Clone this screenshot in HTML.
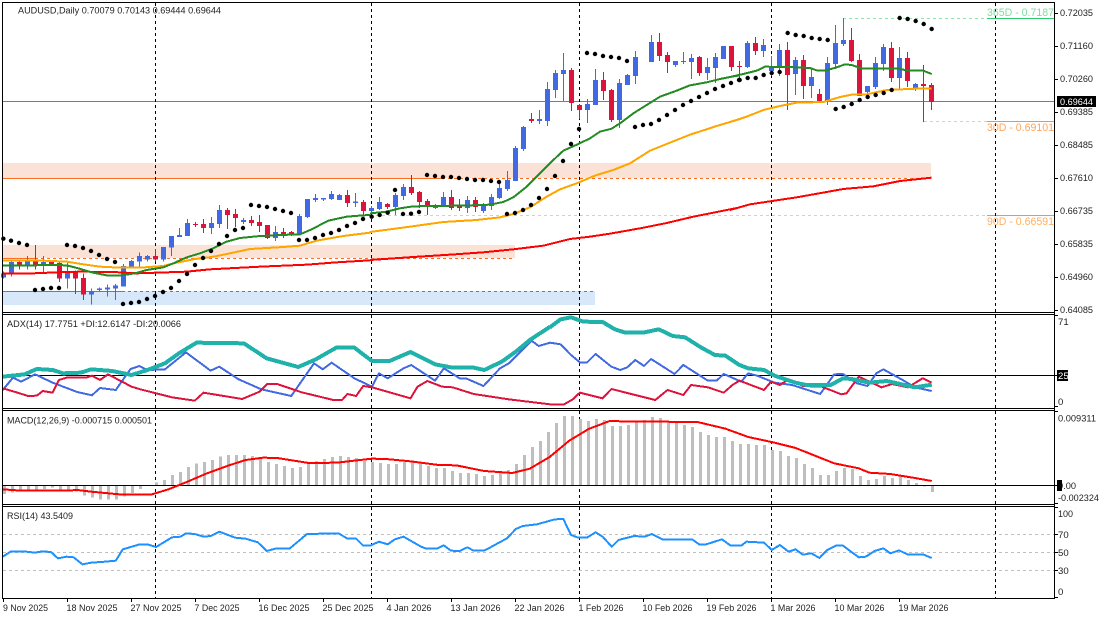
<!DOCTYPE html>
<html><head><meta charset="utf-8"><style>
html,body{margin:0;padding:0;background:#fff;width:1100px;height:619px;overflow:hidden}
svg{display:block}
text{font-family:"Liberation Sans",sans-serif;font-size:9.6px;fill:#222}
.n{fill:none;vector-effect:non-scaling-stroke}
.n *{vector-effect:non-scaling-stroke}
polyline,path{vector-effect:non-scaling-stroke;fill:none}
</style></head><body>
<svg width="1100" height="619" viewBox="0 0 1100 619" xmlns="http://www.w3.org/2000/svg">
<rect width="1100" height="619" fill="#fff"/>
<!-- zones -->
<rect x="3" y="163" width="928" height="15" fill="#fbe2d6"/>
<rect x="3" y="245" width="512" height="13" fill="#fbe2d6"/>
<rect x="3" y="291" width="592" height="14" fill="#d6e8f9"/>
<g shape-rendering="crispEdges" stroke-width="1">
<path d="M3 178.5H442" stroke="#ff6d22"/>
<path d="M442 178.5H931" stroke="#ff6d22" stroke-dasharray="3 3"/>
<path d="M3 258.5H35" stroke="#ff6d22"/>
<path d="M35 258.5H515" stroke="#ff6d22" stroke-dasharray="3 3"/>
<path d="M3 291.5H122" stroke="#3c87d6"/>
<path d="M122 291.5H595" stroke="#3c87d6" stroke-dasharray="3 3"/>
<path d="M3 101.5H1055" stroke="#708090"/>
<path d="M843 18.5H987" stroke="#8fe3ae" stroke-dasharray="3 3"/>
<path d="M987 18.5H1054" stroke="#2ecc71"/>
<path d="M924 121.5H987" stroke="#f9c79b" stroke-dasharray="3 3"/>
<path d="M987 121.5H1054" stroke="#ff9330"/>
<path d="M376 215.5H987" stroke="#f9c79b" stroke-dasharray="3 3"/>
<path d="M987 215.5H1054" stroke="#ff9330"/>
</g>
<!-- vertical dashed -->
<g shape-rendering="crispEdges" stroke="#000" stroke-width="1" stroke-dasharray="3 3">
<path d="M155.5 3V598"/><path d="M371.5 3V598"/><path d="M579.5 3V598"/><path d="M771.5 3V598"/><path d="M995.5 3V598"/>
</g>
<!-- candles -->
<g transform="scale(1 .33333)" shape-rendering="crispEdges">
<path stroke="#4169e1" stroke-width="1" d="M3.5 815V835M11.5 780V830M27.5 768V808M43.5 768V820M67.5 786V866M91.5 866V914M99.5 862V873M107.5 854V890M115.5 852V900M123.5 792V860M131.5 780V803M139.5 758V803M147.5 765V785M163.5 741V785M171.5 708V768M179.5 684V711M187.5 657V708M211.5 651V702M219.5 615V684M243.5 654V672M275.5 678V723M299.5 642V702M307.5 597V654M315.5 582V606M323.5 594V603M331.5 573V600M339.5 582V600M355.5 579V621M371.5 618V640M379.5 591V630M395.5 579V645M403.5 552V600M435.5 612V627M443.5 576V621M467.5 588V639M483.5 609V639M491.5 582V630M499.5 543V597M507.5 513V573M515.5 438V543M523.5 378V453M539.5 330V372M547.5 246V378M555.5 210V294M563.5 159V303M587.5 297V369M595.5 207V315M619.5 237V384M627.5 222V255M635.5 153V252M651.5 105V186M675.5 183V201M683.5 156V192M691.5 162V237M707.5 174V240M715.5 159V249M723.5 138V177M747.5 123V204M763.5 117V171M771.5 168V228M779.5 132V228M795.5 171V285M811.5 207V294M827.5 171V315M835.5 75V207M843.5 54V138M867.5 258V291M875.5 171V267M883.5 132V213M899.5 141V267M915.5 249V273"/>
<path stroke="#4169e1" stroke-width="5" d="M3.5 821V832M11.5 786V824M27.5 783V797M43.5 786V797M67.5 816V836M91.5 873V884M99.5 866V870M107.5 863V869M115.5 857V866M123.5 798V860M131.5 783V801M139.5 768V785M147.5 768V779M163.5 741V779M171.5 708V743M179.5 705V711M187.5 669V708M211.5 669V684M219.5 630V672M243.5 660V666M275.5 696V714M299.5 648V702M307.5 597V651M315.5 594V600M323.5 594V599M331.5 582V597M339.5 585V600M355.5 605V609M371.5 624V633M379.5 606V627M395.5 585V621M403.5 561V588M435.5 615V624M443.5 591V618M467.5 600V624M483.5 615V633M491.5 591V618M499.5 564V594M507.5 540V567M515.5 444V543M523.5 381V447M539.5 357V363M547.5 267V363M555.5 219V270M563.5 210V222M587.5 312V330M595.5 240V315M619.5 249V360M627.5 225V255M635.5 171V228M651.5 126V186M675.5 183V195M683.5 183V186M691.5 174V186M707.5 201V219M715.5 171V204M723.5 138V177M747.5 129V201M763.5 135V153M771.5 201V213M779.5 150V204M795.5 180V222M811.5 231V258M827.5 189V303M835.5 129V192M843.5 120V132M867.5 258V276M875.5 189V261M883.5 141V192M899.5 174V234M915.5 252V267"/>
<path stroke="#dc143c" stroke-width="1" d="M19.5 783V808M35.5 735V808M51.5 783V795M59.5 783V846M75.5 812V882M83.5 820V900M155.5 747V785M195.5 666V681M203.5 657V699M227.5 624V687M235.5 627V681M251.5 648V678M259.5 645V696M267.5 675V717M283.5 684V714M291.5 693V708M347.5 570V621M363.5 600V648M387.5 609V627M411.5 525V585M419.5 573V624M427.5 597V645M451.5 570V630M459.5 597V633M475.5 591V636M531.5 339V369M571.5 204V333M579.5 312V357M603.5 216V300M611.5 267V366M659.5 99V183M667.5 156V219M699.5 168V228M731.5 138V213M739.5 183V240M755.5 111V165M787.5 126V330M803.5 165V297M819.5 267V309M851.5 84V186M859.5 162V288M891.5 126V246M907.5 156V261M923.5 195V366M931.5 249V330"/>
<path stroke="#dc143c" stroke-width="5" d="M19.5 786V797M35.5 783V797M51.5 783V792M59.5 789V836M75.5 816V836M83.5 834V884M155.5 768V779M195.5 672V675M203.5 672V684M227.5 630V645M235.5 642V654M251.5 660V669M259.5 666V678M267.5 675V714M283.5 696V702M291.5 696V702M347.5 585V609M363.5 606V633M387.5 612V621M411.5 561V579M419.5 576V606M427.5 603V618M451.5 591V624M459.5 620V624M475.5 600V621M531.5 357V363M571.5 210V309M579.5 315V330M603.5 240V273M611.5 270V360M659.5 126V168M667.5 165V186M699.5 171V219M731.5 138V201M739.5 198V201M755.5 129V153M787.5 150V225M803.5 180V258M819.5 282V306M851.5 120V183M859.5 180V288M891.5 144V234M907.5 174V243M923.5 252V258M931.5 255V306"/>
</g>
<!-- MA lines -->
<g shape-rendering="crispEdges" stroke-width="2" stroke-linejoin="round">
<g transform="scale(.33333)">
<polyline stroke="#ff0000" points="8,821 100,820 170,817 240,815 340,816 410,820 470,818 560,815 630,808 780,800 920,794 1010,787 1110,781"/>
<polyline stroke="#ffa500" points="8,782 130,782 200,785 250,793 300,800 360,803 420,803 490,798 530,788 580,778 640,770 690,760 750,747 850,741 900,737 950,722 1030,708 1110,698"/>
<polyline stroke="#228b22" points="8,797 100,796 150,795 200,796 235,805 275,817 320,826 365,826 405,820 440,810 490,802 520,790 560,772 600,760 640,745 680,725 720,714 780,708 840,705 900,703 935,688 985,662 1040,650 1090,646 1110,645"/>
</g>
<g transform="translate(370 0) scale(.33333)">
<polyline stroke="#ff0000" points="0,780 130,771 240,764 340,757 430,748 520,737 600,717 660,710 720,701 810,685 890,669 970,650 1110,622"/>
<polyline stroke="#ffa500" points="0,696 60,688 120,680 220,666 320,660 390,652 430,642 480,622 530,590 570,568 620,550 680,525 730,510 780,490 840,452 900,428 960,404 1040,378 1110,357"/>
<polyline stroke="#228b22" points="0,640 50,635 90,625 130,619 200,618 300,616 360,614 400,606 430,592 470,560 510,520 550,480 580,452 625,432 660,415 690,395 725,386 750,370 790,340 830,315 870,290 920,272 960,256 1010,247 1050,237 1090,229 1110,226"/>
</g>
<g transform="translate(730 0) scale(.33333)">
<polyline stroke="#ff0000" points="0,630 60,613 120,604 200,592 290,576 340,567 430,559 510,543 605,533"/>
<polyline stroke="#ffa500" points="0,366 50,350 100,330 150,318 200,308 280,306 330,291 370,283 410,283 470,270 580,265 605,266"/>
<polyline stroke="#228b22" points="0,231 40,222 80,212 105,200 200,202 240,204 260,211 285,212 320,202 345,193 365,195 395,205 500,205 530,211 580,212 605,222"/>
</g>
</g>
<!-- SAR -->
<g stroke="#000" stroke-width="4.4" stroke-linecap="round">
<path transform="scale(.33333)" d="M10 716h.1M33 722h.1M57 729h.1M81 735h.1M105 870h.1M129 867h.1M153 864h.1M177 864h.1M201 735h.1M225 738h.1M249 744h.1M273 753h.1M297 765h.1M321 777h.1M345 786h.1M369 912h.1M393 909h.1M417 906h.1M441 897h.1M465 888h.1M489 876h.1M513 864h.1M537 843h.1M561 822h.1M585 795h.1M609 774h.1M633 753h.1M657 732h.1M681 708h.1M705 690h.1M729 684h.1M753 615h.1M777 618h.1M801 621h.1M825 627h.1M849 633h.1M873 639h.1M897 720h.1M921 720h.1M945 714h.1M969 705h.1M993 699h.1M1017 690h.1M1041 678h.1M1065 669h.1M1089 657h.1"/>
<path transform="translate(370 0) scale(.33333)" d="M5 650h.1M29 645h.1M53 638h.1M75 570h.1M99 642h.1M123 641h.1M147 636h.1M171 525h.1M195 528h.1M219 531h.1M243 531h.1M267 534h.1M291 537h.1M315 540h.1M339 540h.1M363 543h.1M387 546h.1M411 642h.1M435 639h.1M459 630h.1M483 615h.1M507 594h.1M531 567h.1M555 528h.1M579 483h.1M603 432h.1M627 387h.1M651 159h.1M675 162h.1M699 168h.1M723 171h.1M747 174h.1M771 183h.1M795 381h.1M819 375h.1M843 372h.1M867 360h.1M891 345h.1M915 330h.1M939 315h.1M963 303h.1M987 291h.1M1011 279h.1M1035 267h.1M1059 258h.1M1083 249h.1M1107 240h.1"/>
<path transform="translate(730 0) scale(.33333)" d="M29 240h.1M53 234h.1M77 234h.1M101 225h.1M125 219h.1M149 216h.1M173 99h.1M197 105h.1M221 108h.1M245 114h.1M269 117h.1M293 120h.1M317 327h.1M341 321h.1M365 312h.1M389 300h.1M413 291h.1M437 285h.1M461 279h.1M485 270h.1M509 54h.1M533 57h.1M557 63h.1M581 72h.1M605 87h.1"/>
</g>
<!-- ADX -->
<g shape-rendering="crispEdges" stroke-linejoin="round">
<path d="M3 375.5H1055" stroke="#000" stroke-width="1"/>
<g transform="translate(0 310) scale(.35088 .33333)">
<polyline stroke="#4169e1" stroke-width="2" points="8,240 37,203 60,215 100,193 150,218 220,246 262,256 285,234 330,240 372,177 397,168 420,180 470,178 530,127 600,182 625,170 680,208 745,238 830,258 895,160 920,178 945,158 1010,205 1060,230 1080,190 1105,205 1150,175 1172,165 1240,212 1265,175 1310,205 1330,206 1378,228 1425,175 1450,160 1515,92 1535,108 1568,98"/>
<polyline stroke="#dc143c" stroke-width="2" points="8,235 50,248 80,258 105,257 122,243 150,248 168,210 190,203 245,203 262,197 285,210 308,193 375,230 400,238 490,262 555,272 580,248 690,267 740,245 762,222 790,222 860,247 950,270 975,270 990,252 1015,258 1035,228 1060,232 1170,265 1190,230 1218,213 1260,230 1290,232 1350,252 1450,268 1568,283"/>
<polyline stroke="#20b2aa" stroke-width="4" points="8,200 70,193 105,177 150,180 180,190 230,188 260,178 320,183 375,195 420,180 470,160 510,130 560,98 695,100 760,145 850,171 900,148 960,112 1010,113 1060,153 1110,153 1170,126 1240,163 1290,173 1350,173 1380,180 1430,155 1470,125 1510,90 1568,50"/>
</g>
<g transform="translate(550 310) scale(.35088 .33333)">
<polyline stroke="#4169e1" stroke-width="2" points="0,98 30,103 60,135 85,157 105,158 130,132 175,170 200,180 220,172 243,150 268,168 288,147 355,192 380,165 450,212 475,212 495,192 545,215 565,190 590,197 640,218 690,225 770,252 810,193 835,192 875,220 905,228 930,190 950,178 1010,213 1040,232 1088,243"/>
<polyline stroke="#dc143c" stroke-width="2" points="0,283 40,283 65,268 85,248 150,265 175,237 300,270 335,240 380,255 402,225 450,232 495,248 520,225 540,212 610,240 630,215 655,225 680,208 720,228 775,230 830,253 845,250 880,200 945,232 975,222 1020,232 1062,205 1088,218"/>
<polyline stroke="#20b2aa" stroke-width="4" points="0,52 30,28 60,22 95,35 150,36 185,58 215,68 265,68 310,58 350,78 385,82 430,112 470,135 500,137 540,165 565,175 610,180 640,197 700,218 730,225 800,225 835,205 860,207 910,218 960,213 1040,232 1088,224"/>
</g>
</g>
<!-- MACD -->
<g shape-rendering="crispEdges">
<g transform="translate(0 310) scale(1 .33333)">
<path stroke="#bebebe" stroke-width="3" d="M4.5 526V552M12.5 526V548M20.5 526V543M28.5 526V545M36.5 526V540M44.5 526V537M52.5 526V533M60.5 526V540M68.5 526V545M76.5 526V545M84.5 526V557M92.5 526V563M100.5 526V569M108.5 526V569M116.5 526V569M124.5 526V560M132.5 526V549M140.5 526V537M156.5 526V517M164.5 526V510M172.5 526V495M180.5 526V486M188.5 526V471M196.5 526V461M204.5 526V456M212.5 526V450M220.5 526V440M228.5 526V435M236.5 526V435M244.5 526V435M252.5 526V438M260.5 526V445M268.5 526V456M276.5 526V462M284.5 526V468M292.5 526V474M300.5 526V471M308.5 526V459M316.5 526V453M324.5 526V447M332.5 526V441M340.5 526V438M348.5 526V441M356.5 526V444M364.5 526V453M372.5 526V456M380.5 526V459M388.5 526V462M396.5 526V462M404.5 526V456M412.5 526V456M420.5 526V459M428.5 526V468M436.5 526V474M444.5 526V474M452.5 526V483M460.5 526V489M468.5 526V489M476.5 526V492M484.5 526V498M492.5 526V495M500.5 526V489M508.5 526V480M516.5 526V462M524.5 526V435M532.5 526V411M540.5 526V393M548.5 526V366M556.5 526V339M564.5 526V318M572.5 526V318M580.5 526V327M588.5 526V333M596.5 526V327M604.5 526V330M612.5 526V348M620.5 526V348M628.5 526V345M636.5 526V333M644.5 526V330M652.5 526V321M660.5 526V324M668.5 526V333M676.5 526V339M684.5 526V345M692.5 526V351M700.5 526V366M708.5 526V375M716.5 526V381M724.5 526V381M732.5 526V393M740.5 526V402M748.5 526V402M756.5 526V405M764.5 526V405M772.5 526V420M780.5 526V423M788.5 526V438M796.5 526V444M804.5 526V462M812.5 526V474M820.5 526V495M828.5 526V495M836.5 526V483M844.5 526V474M852.5 526V477M860.5 526V498M868.5 526V510M876.5 526V507M884.5 526V498M892.5 526V504M900.5 526V498M908.5 526V510M916.5 526V519M924.5 526V530M932.5 526V546"/>
</g>
<path d="M3 485.5H1055" stroke="#000" stroke-width="1"/>
<g transform="translate(0 310) scale(.35088 .33333)" stroke="#ff0000" stroke-width="2">
<polyline points="8,538 60,542 190,542 220,540 260,545 340,553 430,554 480,538 530,517 590,490 650,467 700,450 750,443 790,444 880,459 960,458 1060,446 1100,447 1170,454 1250,465 1300,466 1380,483 1460,489 1510,476 1568,440"/>
</g>
<g transform="translate(550 310) scale(.35088 .33333)" stroke="#ff0000" stroke-width="2">
<polyline points="0,440 55,392 110,357 170,333 240,335 310,335 420,336 500,356 565,381 640,398 700,414 810,460 880,475 910,488 970,492 1040,504 1088,513"/>
</g>
</g>
<!-- RSI -->
<g shape-rendering="crispEdges">
<g stroke="#c0c0c0" stroke-width="1" stroke-dasharray="3 3">
<path d="M3 534.5H1055"/><path d="M3 552.5H1055"/><path d="M3 570.5H1055"/>
</g>
<g transform="translate(0 500) scale(.35088 .33333)" stroke="#1e90ff" stroke-width="2">
<polyline points="8,170 30,155 75,155 100,158 120,154 145,156 165,175 190,170 210,172 235,193 260,188 300,185 330,182 350,148 395,134 420,133 445,141 490,112 515,110 530,100 555,102 580,110 600,108 625,95 670,113 700,116 735,127 760,153 785,146 825,146 875,102 965,100 990,116 1015,116 1035,137 1055,137 1080,125 1105,133 1125,118 1150,110 1200,140 1215,146 1245,146 1265,136 1285,152 1310,153 1332,142 1350,152 1380,152 1445,115 1470,87 1490,78 1530,73 1568,62"/>
</g>
<g transform="translate(550 500) scale(.35088 .33333)" stroke="#1e90ff" stroke-width="2">
<polyline points="0,62 15,58 38,57 60,105 80,113 105,113 130,97 150,110 176,140 195,120 240,108 270,110 290,102 320,118 405,118 425,133 445,133 490,118 515,137 545,137 560,125 610,128 632,150 655,135 680,155 700,148 720,164 745,160 768,174 790,150 815,137 835,137 880,172 900,170 925,153 950,145 970,160 995,151 1020,164 1065,164 1088,174"/>
</g>
</g>
<!-- frames -->
<g shape-rendering="crispEdges" stroke="#000" stroke-width="1">
<path d="M2.5 2V598.5M1054.5 2V598.5M2 2.5H1055M2 312.5H1055M2 314.5H1055M2 408.5H1055M2 410.5H1055M2 504.5H1055M2 506.5H1055M2 598.5H1055"/>
<path d="M1055 13.5h3M1055 46.5h3M1055 79.5h3M1055 112.5h3M1055 145.5h3M1055 178.5h3M1055 211.5h3M1055 244.5h3M1055 277.5h3M1055 310.5h3M1055 315.5h3M1055 375.5h3M1055 406.5h3M1055 411.5h3M1055 485.5h3M1055 503.5h3M1055 507.5h3M1055 534.5h3M1055 552.5h3M1055 570.5h3M1055 597.5h3"/>
<path d="M3.5 598V602M67.5 598V602M131.5 598V602M195.5 598V602M259.5 598V602M323.5 598V602M387.5 598V602M451.5 598V602M515.5 598V602M579.5 598V602M643.5 598V602M707.5 598V602M771.5 598V602M835.5 598V602M899.5 598V602"/>
</g>
<!-- labels -->
<text x="18" y="13.5" textLength="203" lengthAdjust="spacingAndGlyphs">AUDUSD,Daily  0.70079 0.70143 0.69444 0.69644</text>
<text x="7" y="327" textLength="174" lengthAdjust="spacingAndGlyphs">ADX(14) 17.7751 +DI:12.6147 -DI:20.0066</text>
<text x="7" y="423.5" textLength="145" lengthAdjust="spacingAndGlyphs">MACD(12,26,9) -0.000715 0.000501</text>
<text x="7" y="519" textLength="66" lengthAdjust="spacingAndGlyphs">RSI(14) 43.5409</text>
<g font-size="11">
<text x="987" y="16" textLength="67" lengthAdjust="spacingAndGlyphs" style="fill:#7fdda0;font-size:11px">365D - 0.7187</text>
<text x="987" y="131" textLength="67" lengthAdjust="spacingAndGlyphs" style="fill:#ffa65c;font-size:11px">30D - 0.69101</text>
<text x="987" y="225" textLength="67" lengthAdjust="spacingAndGlyphs" style="fill:#ffb060;font-size:11px">90D - 0.66591</text>
</g>
<g>
<text x="1060" y="16" textLength="33" lengthAdjust="spacingAndGlyphs">0.72035</text>
<text x="1060" y="49" textLength="33" lengthAdjust="spacingAndGlyphs">0.71160</text>
<text x="1060" y="82" textLength="33" lengthAdjust="spacingAndGlyphs">0.70260</text>
<text x="1060" y="115" textLength="33" lengthAdjust="spacingAndGlyphs">0.69385</text>
<text x="1060" y="148" textLength="33" lengthAdjust="spacingAndGlyphs">0.68485</text>
<text x="1060" y="181" textLength="33" lengthAdjust="spacingAndGlyphs">0.67610</text>
<text x="1060" y="214" textLength="33" lengthAdjust="spacingAndGlyphs">0.66735</text>
<text x="1060" y="247" textLength="33" lengthAdjust="spacingAndGlyphs">0.65835</text>
<text x="1060" y="280" textLength="33" lengthAdjust="spacingAndGlyphs">0.64960</text>
<text x="1060" y="313" textLength="33" lengthAdjust="spacingAndGlyphs">0.64085</text>
<rect x="1057" y="96" width="39" height="11" fill="#000"/>
<text x="1060" y="105" textLength="33" lengthAdjust="spacingAndGlyphs" style="fill:#fff">0.69644</text>
<text x="1058" y="325">71</text>
<rect x="1057" y="370" width="11" height="11" fill="#000"/>
<text x="1058" y="379" style="fill:#fff">25</text>
<text x="1058" y="405">0</text>
<text x="1058" y="421.5" textLength="38" lengthAdjust="spacingAndGlyphs">0.009311</text>
<text x="1058" y="489" textLength="18" lengthAdjust="spacingAndGlyphs">0.00</text>
<rect x="1057" y="480" width="5" height="11" fill="#000"/>
<text x="1058" y="501" textLength="41" lengthAdjust="spacingAndGlyphs">-0.002324</text>
<text x="1058" y="517" textLength="15" lengthAdjust="spacingAndGlyphs">100</text>
<text x="1058" y="538">70</text>
<text x="1058" y="556">50</text>
<text x="1058" y="574">30</text>
<text x="1058" y="595">0</text>
</g>
<g>
<text x="3" y="611" textLength="45" lengthAdjust="spacingAndGlyphs">9 Nov 2025</text>
<text x="66.500" y="611" textLength="51" lengthAdjust="spacingAndGlyphs">18 Nov 2025</text>
<text x="130.500" y="611" textLength="51" lengthAdjust="spacingAndGlyphs">27 Nov 2025</text>
<text x="194.500" y="611" textLength="45" lengthAdjust="spacingAndGlyphs">7 Dec 2025</text>
<text x="258.500" y="611" textLength="51" lengthAdjust="spacingAndGlyphs">16 Dec 2025</text>
<text x="322.500" y="611" textLength="51" lengthAdjust="spacingAndGlyphs">25 Dec 2025</text>
<text x="386.500" y="611" textLength="45" lengthAdjust="spacingAndGlyphs">4 Jan 2026</text>
<text x="450.500" y="611" textLength="50" lengthAdjust="spacingAndGlyphs">13 Jan 2026</text>
<text x="514.500" y="611" textLength="50" lengthAdjust="spacingAndGlyphs">22 Jan 2026</text>
<text x="578.500" y="611" textLength="45" lengthAdjust="spacingAndGlyphs">1 Feb 2026</text>
<text x="642.500" y="611" textLength="50" lengthAdjust="spacingAndGlyphs">10 Feb 2026</text>
<text x="706.500" y="611" textLength="50" lengthAdjust="spacingAndGlyphs">19 Feb 2026</text>
<text x="770.500" y="611" textLength="45" lengthAdjust="spacingAndGlyphs">1 Mar 2026</text>
<text x="834.500" y="611" textLength="50" lengthAdjust="spacingAndGlyphs">10 Mar 2026</text>
<text x="898.500" y="611" textLength="50" lengthAdjust="spacingAndGlyphs">19 Mar 2026</text>
</g>
</svg>
</body></html>
